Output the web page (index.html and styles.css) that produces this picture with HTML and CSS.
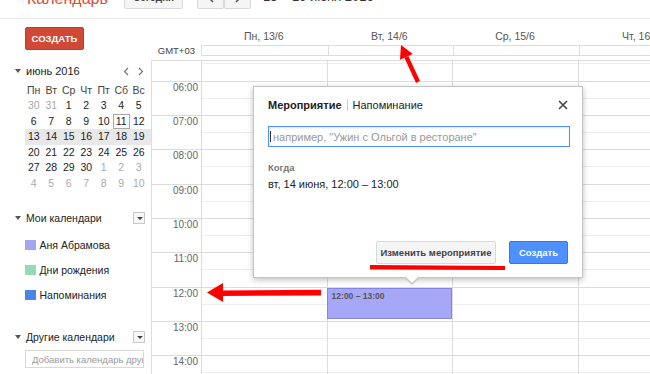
FILE: index.html
```html
<!DOCTYPE html>
<html lang="ru">
<head>
    <meta charset="UTF-8">
    <title>Календарь</title>
    <link rel="stylesheet" href="styles.css">
</head>
<body>

<header class="topbar">
    <div class="logo">Календарь</div>
    <button class="btn today">Сегодня</button>
    <div class="nav">
        <button class="btn nav-btn">
            <svg width="6" height="10" viewBox="0 0 6 10"><polyline points="5,1 1,5 5,9" fill="none" stroke="#555" stroke-width="1.5"/></svg>
        </button>
        <button class="btn nav-btn">
            <svg width="6" height="10" viewBox="0 0 6 10"><polyline points="1,1 5,5 1,9" fill="none" stroke="#555" stroke-width="1.5"/></svg>
        </button>
    </div>
    <div class="range">13 – 19 июня 2016</div>
</header>

<div class="layout">
    <aside class="sidebar">
        <button class="create">СОЗДАТЬ</button>

        <div class="mini-head">
            <span class="caret"></span>
            <span>июнь 2016</span>
            <span class="mini-arrows">
                <svg width="6" height="9" viewBox="0 0 6 9"><polyline points="5,1 1.5,4.5 5,8" fill="none" stroke="#777" stroke-width="1.2"/></svg>
                <svg width="6" height="9" viewBox="0 0 6 9"><polyline points="1,1 4.5,4.5 1,8" fill="none" stroke="#777" stroke-width="1.2"/></svg>
            </span>
        </div>

        <div class="mini">
            <div class="week dow"><span>Пн</span><span>Вт</span><span>Ср</span><span>Чт</span><span>Пт</span><span>Сб</span><span>Вс</span></div>
            <div class="week"><span class="muted">30</span><span class="muted">31</span><span>1</span><span>2</span><span>3</span><span>4</span><span>5</span></div>
            <div class="week"><span>6</span><span>7</span><span>8</span><span>9</span><span>10</span><span class="sel">11</span><span>12</span></div>
            <div class="week current"><span>13</span><span>14</span><span>15</span><span>16</span><span>17</span><span>18</span><span>19</span></div>
            <div class="week"><span>20</span><span>21</span><span>22</span><span>23</span><span>24</span><span>25</span><span>26</span></div>
            <div class="week"><span>27</span><span>28</span><span>29</span><span>30</span><span class="muted">1</span><span class="muted">2</span><span class="muted">3</span></div>
            <div class="week"><span class="muted">4</span><span class="muted">5</span><span class="muted">6</span><span class="muted">7</span><span class="muted">8</span><span class="muted">9</span><span class="muted">10</span></div>
        </div>

        <div class="section-head">
            <span class="caret"></span>
            <span>Мои календари</span>
            <span class="dd"></span>
        </div>
        <div class="cal-list">
            <div class="cal-item"><span class="swatch lavender"></span>Аня Абрамова</div>
            <div class="cal-item"><span class="swatch mint"></span>Дни рождения</div>
            <div class="cal-item"><span class="swatch blue"></span>Напоминания</div>
        </div>

        <div class="section-head other">
            <span class="caret"></span>
            <span>Другие календари</span>
            <span class="dd"></span>
        </div>
        <input class="add-input" type="text" placeholder="Добавить календарь друга">
    </aside>

    <main class="main">
        <div class="dayhead">
            <div class="daynames">
                <div class="gutter"></div>
                <div class="dayname">Пн, 13/6</div>
                <div class="dayname">Вт, 14/6</div>
                <div class="dayname">Ср, 15/6</div>
                <div class="dayname">Чт, 16/6</div>
            </div>
            <div class="allday">
                <div class="gutter tz">GMT+03</div>
                <div class="allday-cells">
                    <div class="allday-cell"></div>
                    <div class="allday-cell"></div>
                    <div class="allday-cell"></div>
                    <div class="allday-cell"></div>
                </div>
            </div>
        </div>

        <div class="grid">
            <div class="grid-inner">
                <!-- 05:00 row is scrolled mostly out of view -->
                <div class="row"><div class="time"></div><div class="cell"></div><div class="cell"></div><div class="cell"></div><div class="cell"></div></div>
                <div class="row"><div class="time">06:00</div><div class="cell"></div><div class="cell"></div><div class="cell"></div><div class="cell"></div></div>
                <div class="row"><div class="time">07:00</div><div class="cell"></div><div class="cell"></div><div class="cell"></div><div class="cell"></div></div>
                <div class="row"><div class="time">08:00</div><div class="cell"></div><div class="cell"></div><div class="cell"></div><div class="cell"></div></div>
                <div class="row"><div class="time">09:00</div><div class="cell"></div><div class="cell"></div><div class="cell"></div><div class="cell"></div></div>
                <div class="row"><div class="time">10:00</div><div class="cell"></div><div class="cell"></div><div class="cell"></div><div class="cell"></div></div>
                <div class="row"><div class="time">11:00</div><div class="cell"></div><div class="cell"></div><div class="cell"></div><div class="cell"></div></div>
                <div class="row">
                    <div class="time">12:00</div>
                    <div class="cell"></div>
                    <div class="cell"><div class="event">12:00 – 13:00</div></div>
                    <div class="cell"></div>
                    <div class="cell"></div>
                </div>
                <div class="row"><div class="time">13:00</div><div class="cell"></div><div class="cell"></div><div class="cell"></div><div class="cell"></div></div>
                <div class="row"><div class="time">14:00</div><div class="cell"></div><div class="cell"></div><div class="cell"></div><div class="cell"></div></div>
            </div>
        </div>
    </main>
</div>

<div class="popup">
    <div class="popup-head">
        <span class="tab-active">Мероприятие</span>
        <span class="tab-sep"></span>
        <span>Напоминание</span>
        <svg class="close" width="10" height="10" viewBox="0 0 10 10"><path d="M1 1 L9 9 M9 1 L1 9" stroke="#444" stroke-width="1.6"/></svg>
    </div>
    <div class="title-field">
        <input class="title-input" type="text" placeholder='например, "Ужин с Ольгой в ресторане"'>
    </div>
    <div class="when-label">Когда</div>
    <div class="when">вт, 14 июня, 12:00 – 13:00</div>
    <div class="actions">
        <button class="btn btn-edit">Изменить мероприятие</button>
        <button class="btn btn-create">Создать</button>
    </div>
</div>

<!-- red annotation marks drawn over the screenshot -->
<svg class="marks" width="650" height="374" viewBox="0 0 650 374">
    <g fill="#f00">
        <polygon points="401,45 412.8,53.9 400,59.7"/>
        <polygon points="408.4,55.9 404.4,57.7 416,82.9 420,81.1"/>
        <polygon points="207,292.5 223,283 223,302"/>
        <polygon points="221,290.5 321,289.8 321,295.5 221,296"/>
        <polygon points="370,265 505,266 505,270 370,269.5"/>
    </g>
</svg>

</body>
</html>
```

FILE: styles.css
```css
* {
    box-sizing: border-box;
}
body {
    margin: 0;
    width: 650px;
    height: 374px;
    overflow: hidden;
    position: relative;
    font-family: "Liberation Sans", Arial, sans-serif;
    color: #222;
    background: #fff;
}

/* top bar (scrolled, only the bottom is visible) */
.topbar {
    height: 19px;
    border-bottom: 1px solid #ebebeb;
    display: flex;
    align-items: flex-start;
    overflow: hidden;
}
.logo {
    flex: none;
    width: 124px;
    padding-left: 27px;
    margin-top: -9.5px;
    font-size: 16px;
    line-height: 16px;
    color: #dd4b39;
}
.btn {
    font-family: inherit;
    background: #f5f5f5;
    border: 1px solid #d9d9d9;
    border-radius: 2px;
    color: #444;
    font-weight: bold;
    padding: 0;
}
.today {
    flex: none;
    width: 59px;
    height: 23px;
    margin-top: -14px;
    font-size: 10px;
}
.nav {
    display: flex;
    margin-left: 14px;
    margin-top: -14px;
}
.nav-btn {
    width: 27px;
    height: 23px;
    display: flex;
    align-items: center;
    justify-content: center;
}
.range {
    margin-left: 12px;
    margin-top: -10.5px;
    font-size: 13px;
    line-height: 13px;
    color: #333;
}

.layout {
    display: flex;
    height: 355px;
}

/* sidebar */
.sidebar {
    flex: none;
    width: 151px;
    padding-left: 25px;
}
.create {
    display: block;
    margin-top: 8px;
    width: 59px;
    height: 23px;
    padding: 0;
    background: #d14836;
    border: 1px solid #c13e2c;
    border-radius: 2px;
    color: #fff;
    font-family: inherit;
    font-weight: bold;
    font-size: 9.5px;
}
.caret {
    flex: none;
    width: 0;
    height: 0;
    border-left: 3px solid transparent;
    border-right: 3px solid transparent;
    border-top: 4px solid #555;
    margin-left: -10px;
    margin-right: 5px;
}
.mini-head {
    display: flex;
    align-items: center;
    width: 122px;
    height: 14px;
    margin-top: 14px;
    font-size: 11px;
}
.mini-arrows {
    margin-left: auto;
    display: flex;
    gap: 9px;
    padding-right: 3px;
}
.mini {
    margin-top: 4.5px;
    font-size: 10.5px;
}
.week {
    display: grid;
    grid-template-columns: repeat(7, 17.5px);
    height: 15.5px;
    line-height: 15.5px;
    text-align: center;
}
.week.dow {
    color: #444;
}
.week.current {
    background: #e8e8e8;
}
.week .muted {
    color: #aaa;
}
.week .sel {
    border: 1px solid #a8a8a8;
    line-height: 13.5px;
}

.section-head {
    display: flex;
    align-items: center;
    width: 120px;
    height: 14px;
    margin-top: 20px;
    font-size: 10.5px;
}
.section-head.other {
    margin-top: 23px;
}
.dd {
    margin-left: auto;
    width: 12px;
    height: 12px;
    border: 1px solid #c8c8c8;
    background: #f7f7f7;
    position: relative;
}
.dd::after {
    content: "";
    position: absolute;
    left: 2.5px;
    top: 3.5px;
    border-left: 3px solid transparent;
    border-right: 3px solid transparent;
    border-top: 3px solid #444;
}
.cal-list {
    margin-top: 7px;
}
.cal-item {
    display: flex;
    align-items: center;
    height: 25px;
    font-size: 10.5px;
}
.swatch {
    width: 11px;
    height: 10px;
    margin-right: 3.5px;
}
.lavender { background: #a4a4f5; }
.mint { background: #92dbb6; }
.blue { background: #4a86e8; }
.add-input {
    display: block;
    margin-top: 6px;
    width: 119px;
    height: 18px;
    border: 1px solid #d9d9d9;
    padding: 0 0 0 6px;
    font-family: inherit;
    font-size: 9.5px;
}
.add-input::placeholder {
    color: #999;
}

/* week grid */
.main {
    flex: 1;
    min-width: 0;
    overflow: hidden;
}
.dayhead {
    padding-top: 10px;
}
.daynames {
    display: flex;
    height: 15px;
    line-height: 15px;
    font-size: 10.5px;
    color: #555;
}
.gutter {
    flex: none;
    width: 50px;
}
.dayname {
    flex: none;
    width: 125.6px;
    text-align: center;
}
.allday {
    display: flex;
    margin-top: 1px;
    margin-bottom: 4px;
    height: 11px;
}
.tz {
    text-align: right;
    padding-right: 6px;
    font-size: 9.5px;
    line-height: 11px;
    color: #444;
}
.allday-cells {
    display: flex;
    flex: none;
    border: 1px solid #ddd;
}
.allday-cell {
    flex: none;
    width: 125.6px;
}
.allday-cell + .allday-cell {
    border-left: 1px solid #ddd;
}
.grid {
    height: 314px;
    border-top: 1px solid #ddd;
    border-left: 1px solid #ddd;
    overflow: hidden;
}
.grid-inner {
    margin-top: -14.8px;
}
.row {
    display: flex;
    height: 34.33px;
    border-top: 1px solid #dcdcdc;
}
.time {
    flex: none;
    width: 49px;
    padding-right: 3px;
    text-align: right;
    font-size: 10px;
    line-height: 12px;
    color: #666;
}
.cell {
    flex: none;
    width: 125.6px;
    border-left: 1px solid #dcdcdc;
    position: relative;
}
.cell::before {
    content: "";
    position: absolute;
    left: 0;
    right: 0;
    top: 16.2px;
    border-top: 1px solid #eee;
}
.event {
    position: absolute;
    top: 0;
    left: -1px;
    right: 0;
    height: 31px;
    padding: 2px 4px;
    background: #a7a7f8;
    border: 1px solid #8585e0;
    color: #555;
    font-size: 8.5px;
    font-weight: bold;
    z-index: 1;
}

/* quick add bubble */
.popup {
    position: absolute;
    left: 253px;
    top: 86px;
    width: 330px;
    height: 192px;
    padding: 11px 14px 13px;
    display: flex;
    flex-direction: column;
    background: #fff;
    border: 1px solid #c4c4c4;
    box-shadow: 0 2px 6px rgba(0, 0, 0, 0.25);
    z-index: 5;
}
.popup::before {
    content: "";
    position: absolute;
    left: 150px;
    bottom: -8px;
    border-left: 8px solid transparent;
    border-right: 8px solid transparent;
    border-top: 8px solid #c4c4c4;
}
.popup::after {
    content: "";
    position: absolute;
    left: 151px;
    bottom: -6px;
    border-left: 7px solid transparent;
    border-right: 7px solid transparent;
    border-top: 7px solid #fff;
}
.popup-head {
    display: flex;
    align-items: center;
    height: 14px;
    font-size: 11px;
}
.tab-active {
    font-weight: bold;
}
.tab-sep {
    width: 1px;
    height: 12px;
    background: #ccc;
    margin: 0 5px;
}
.close {
    margin-left: auto;
}
.title-field {
    margin-top: 14px;
    position: relative;
}
.title-field::before {
    content: "";
    position: absolute;
    left: 2px;
    top: 5px;
    width: 1px;
    height: 11px;
    background: #333;
}
.title-input {
    display: block;
    width: 302px;
    height: 21px;
    border: 1px solid #4d90fe;
    padding: 0 0 0 4px;
    font-family: inherit;
    font-size: 11px;
    outline: none;
    box-shadow: inset 0 1px 2px rgba(0, 0, 0, 0.1);
}
.title-input::placeholder {
    color: #999;
}
.when-label {
    margin-top: 15px;
    font-size: 9.5px;
    line-height: 12px;
    font-weight: bold;
    color: #777;
}
.when {
    margin-top: 3px;
    font-size: 11px;
    line-height: 14px;
}
.actions {
    margin-top: auto;
    display: flex;
    justify-content: flex-end;
    gap: 13px;
}
.btn-edit {
    width: 120px;
    height: 23px;
    font-size: 9.5px;
}
.btn-create {
    width: 59px;
    height: 23px;
    font-size: 9.5px;
    background: #4d90fe;
    border-color: #3079ed;
    color: #fff;
}

.marks {
    position: absolute;
    left: 0;
    top: 0;
    pointer-events: none;
    z-index: 10;
}
```
